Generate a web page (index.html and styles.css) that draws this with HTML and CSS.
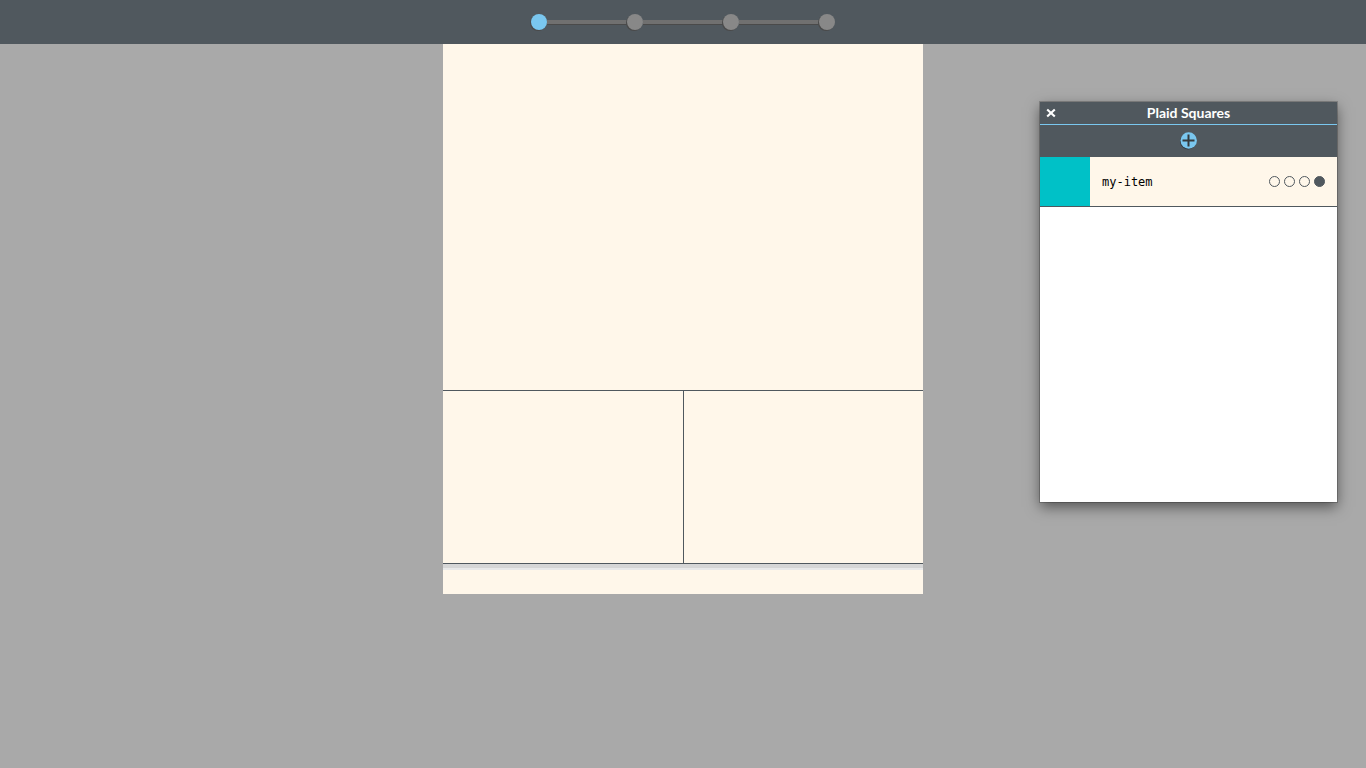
FILE: index.html
```html
<!DOCTYPE html>
<html lang="en">
<head>
<meta charset="utf-8">
<meta name="viewport" content="width=device-width, initial-scale=1">
<title>Plaid Squares</title>
<link rel="stylesheet" href="styles.css">
</head>
<body>
<header class="topbar">
  <nav class="steps" aria-label="Steps">
    <button class="step step-active" type="button" aria-label="Step 1" aria-current="step"></button>
    <span class="step-line"></span>
    <button class="step" type="button" aria-label="Step 2"></button>
    <span class="step-line"></span>
    <button class="step" type="button" aria-label="Step 3"></button>
    <span class="step-line"></span>
    <button class="step" type="button" aria-label="Step 4"></button>
  </nav>
</header>

<main class="page">
  <section class="page-hero"></section>
  <div class="page-columns">
    <section class="page-cell"></section>
    <section class="page-cell"></section>
  </div>
  <div class="page-divider"></div>
  <footer class="page-footer"></footer>
</main>

<aside class="panel" aria-labelledby="panel-title">
  <div class="panel-header">
    <button class="panel-close" type="button" aria-label="Close">
      <svg width="10" height="10" viewBox="0 0 10 10" aria-hidden="true"><path d="M1.2 1.4 8.8 8.6M8.8 1.4 1.2 8.6" stroke="#fff" stroke-width="2.1" fill="none"/></svg>
    </button>
    <h1 class="panel-title" id="panel-title">Plaid Squares</h1>
  </div>
  <div class="panel-toolbar">
    <button class="panel-add" type="button" aria-label="Add item">
      <svg width="17" height="18" viewBox="0 0 17 18" aria-hidden="true"><circle cx="8" cy="9.4" r="8" fill="#343b40"/><circle cx="8.7" cy="8.5" r="8.2" fill="#7ac7ef"/><path d="M8.5 2.5v12M2.5 8.5h12" stroke="#353a3d" stroke-width="2" fill="none"/></svg>
    </button>
  </div>
  <ul class="items">
    <li class="item">
      <span class="item-swatch"></span>
      <span class="item-name">my-item</span>
      <div class="item-states" role="radiogroup" aria-label="my-item step">
        <input class="state" type="radio" name="my-item-state" aria-label="Step 1">
        <input class="state" type="radio" name="my-item-state" aria-label="Step 2">
        <input class="state" type="radio" name="my-item-state" aria-label="Step 3">
        <input class="state" type="radio" name="my-item-state" aria-label="Step 4" checked>
      </div>
    </li>
  </ul>
</aside>
</body>
</html>
```
FILE: styles.css
```css
:root {
  --slate: #50585e;
  --cream: #fff7ea;
  --sky: #7ac7ef;
}

* {
  box-sizing: border-box;
}

body {
  margin: 0;
  min-height: 100vh;
  background: #a9a9a9;
  font-family: Lato, "Open Sans", sans-serif;
}

button {
  padding: 0;
  border: 0;
  background: none;
  cursor: pointer;
}

svg {
  display: block;
}

.topbar {
  display: flex;
  align-items: center;
  justify-content: center;
  height: 44px;
  background: var(--slate);
}

.steps {
  display: flex;
  align-items: center;
}

.step {
  width: 16px;
  height: 16px;
  border-radius: 50%;
  background: #888;
  box-shadow: -1px 1px 0 #4a4a4a;
}

.step-active {
  background: var(--sky);
}

.step-line {
  width: 80px;
  height: 4px;
  background: #707070;
  box-shadow: 0 1px 0 #4a4a4a;
}

.page {
  display: flex;
  flex-direction: column;
  max-width: 480px;
  margin: 0 auto;
  background: var(--cream);
}

.page-hero {
  min-height: 347px;
  border-bottom: 1px solid var(--slate);
}

.page-columns {
  display: grid;
  grid-template-columns: 1fr 1fr;
  min-height: 173px;
  border-bottom: 1px solid var(--slate);
}

.page-cell + .page-cell {
  border-left: 1px solid var(--slate);
}

.page-divider {
  height: 6px;
  background: #d6d6d6;
  border-bottom: 2px solid #e9e9e9;
}

.page-footer {
  min-height: 24px;
}

/* Floating tool window */
.panel {
  position: absolute;
  top: 102px;
  right: 29px;
  width: 297px;
  min-height: 400px;
  background: #fff;
  box-shadow: 0 0 0 1px rgba(0, 0, 0, 0.2), 0 5px 13px rgba(0, 0, 0, 0.5);
}

.panel-header {
  display: grid;
  grid-template-columns: 22px 1fr 22px;
  align-items: center;
  height: 23px;
  background: var(--slate);
  border-bottom: 1px solid var(--sky);
}

.panel-close {
  display: grid;
  place-items: center;
  height: 22px;
}

.panel-title {
  margin: 0;
  color: #fff;
  font-size: 14px;
  font-weight: 700;
  line-height: 22px;
  text-align: center;
}

.panel-toolbar {
  display: flex;
  align-items: center;
  justify-content: center;
  height: 32px;
  background: var(--slate);
}

.items {
  margin: 0;
  padding: 0;
  list-style: none;
}

.item {
  display: flex;
  align-items: center;
  height: 50px;
  padding-right: 12px;
  background: var(--cream);
  border-bottom: 1px solid var(--slate);
}

.item-swatch {
  align-self: stretch;
  width: 50px;
  background: #00c1c7;
}

.item-name {
  flex: 1;
  padding-left: 12px;
  color: #000;
  font: 12px/16px "DejaVu Sans Mono", monospace;
}

.item-states {
  display: flex;
  gap: 4px;
}

.state {
  appearance: none;
  width: 11px;
  height: 11px;
  margin: 0;
  border: 1px solid var(--slate);
  border-radius: 50%;
}

.state:checked {
  background: var(--slate);
}
```
